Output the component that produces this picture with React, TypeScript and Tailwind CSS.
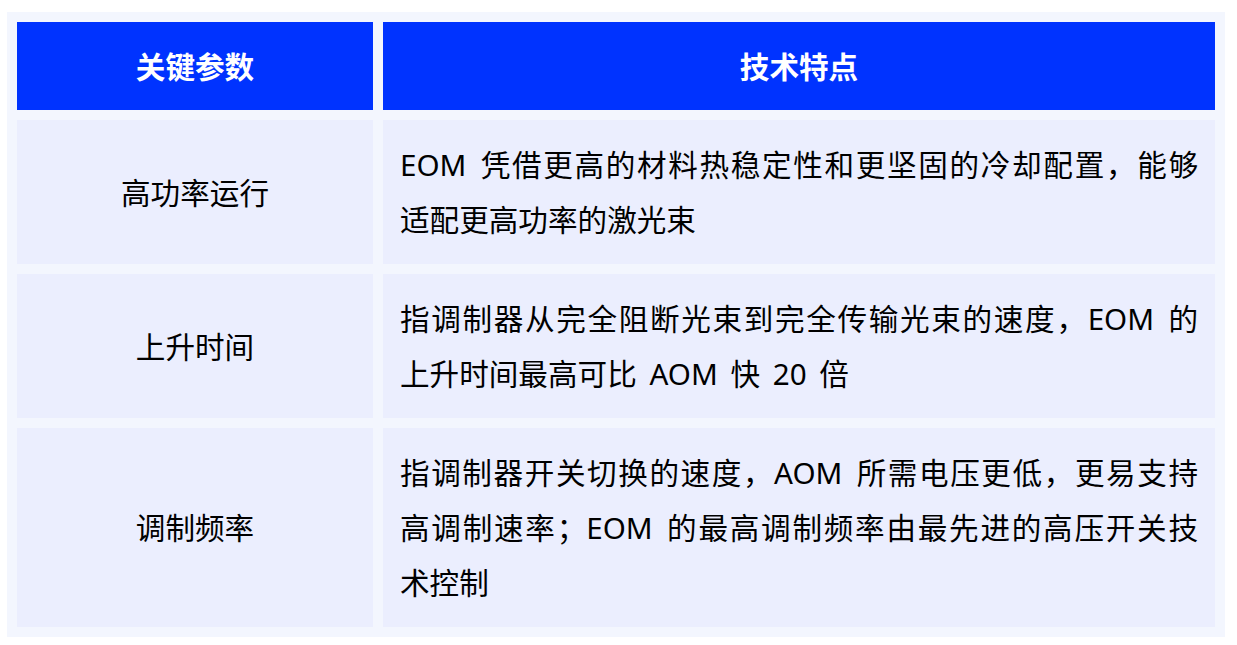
import React from "react";

interface Row {
  name: string;
  lines: string[];
}

const rows: Row[] = [
  {
    name: "高功率运行",
    lines: ["EOM 凭借更高的材料热稳定性和更坚固的冷却配置，能够", "适配更高功率的激光束"],
  },
  {
    name: "上升时间",
    lines: ["指调制器从完全阻断光束到完全传输光束的速度，EOM 的", "上升时间最高可比 AOM 快 20 倍"],
  },
  {
    name: "调制频率",
    lines: [
      "指调制器开关切换的速度，AOM 所需电压更低，更易支持",
      "高调制速率；EOM 的最高调制频率由最先进的高压开关技",
      "术控制",
    ],
  },
];

export default function App() {
  return (
    <div
      className="min-h-[645px] w-[1237px] bg-white pl-[7px] pt-[12px] text-black"
      style={{ fontFamily: '"Noto Sans", "Noto Sans CJK SC", sans-serif' }}
    >
      <div className="grid w-[1218px] grid-cols-[356px_832px] gap-[10px] bg-[#f3f6fe] p-[10px] text-[29.6px] leading-[55px] [word-spacing:5px]">
        {/* header */}
        <div className="flex h-[88px] items-center justify-center bg-[#0033ff] font-bold text-white">
          关键参数
        </div>
        <div className="flex h-[88px] items-center justify-center bg-[#0033ff] font-bold text-white">
          技术特点
        </div>

        {rows.map((row, i) => (
          <React.Fragment key={i}>
            <div className="flex items-center justify-center bg-[#ebeefe]">{row.name}</div>
            <div className="bg-[#ebeefe] px-[17px] py-[17px]">
              {row.lines.map((line, j) => (
                <div
                  key={j}
                  className={
                    j < row.lines.length - 1
                      ? "whitespace-nowrap text-justify [text-align-last:justify]"
                      : "whitespace-nowrap"
                  }
                >
                  {line}
                </div>
              ))}
            </div>
          </React.Fragment>
        ))}
      </div>
    </div>
  );
}
